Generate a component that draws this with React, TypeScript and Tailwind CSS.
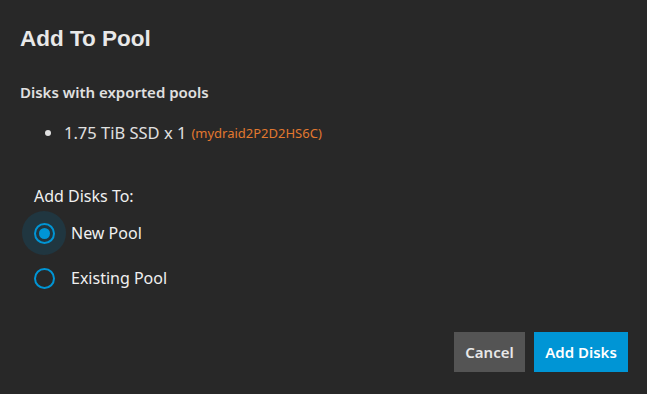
export default function App() {
  const font = { fontFamily: '"Noto Sans", "Open Sans", sans-serif' };
  return (
    <div className="w-[647px] h-[394px] bg-[#282828] text-[#e6e6e6] flex flex-col" style={font}>
      <div className="pl-[20px] pt-[24px] text-[22.5px] font-bold leading-[30px] text-[#e8e8e8] [font-family:'Liberation_Sans',sans-serif]">
        Add To Pool
      </div>
      <div className="pl-[20px] mt-[28px] text-[15px] font-semibold leading-[20px] text-[#e0e0e0]">
        Disks with exported pools
      </div>
      <ul className="mt-[19px] pl-[45px] flex flex-col">
        <li className="flex items-center gap-[13px] leading-[24px]">
          <span className="w-[6px] h-[6px] rounded-full bg-[#e0e0e0]" />
          <span className="text-[16.5px] text-[#e0e0e0]">1.75 TiB SSD x 1</span>
          <span className="-ml-[8px] text-[13px] text-[#e2782f]">(mydraid2P2D2HS6C)</span>
        </li>
      </ul>
      <div className="pl-[34px] mt-[39px] text-[16px] leading-[24px] text-[#f0f0f0]">Add Disks To:</div>
      <div className="pl-[22px] mt-[3px] flex flex-col">
        <div className="flex items-center h-[44px]">
          <div className="w-[44px] h-[44px] rounded-full bg-[#203640] flex items-center justify-center">
            <div className="w-[21px] h-[21px] rounded-full border-2 border-[#0095d5] flex items-center justify-center">
              <div className="w-[11px] h-[11px] rounded-full bg-[#0095d5]" />
            </div>
          </div>
          <span className="ml-[5px] text-[16px] text-[#f0f0f0]">New Pool</span>
        </div>
        <div className="flex items-center h-[44px] mt-[1px]">
          <div className="w-[44px] h-[44px] flex items-center justify-center">
            <div className="w-[21px] h-[21px] rounded-full border-2 border-[#0095d5]" />
          </div>
          <span className="ml-[5px] text-[16px] text-[#f0f0f0]">Existing Pool</span>
        </div>
      </div>
      <div className="flex justify-end gap-[9px] pr-[19px] mt-auto mb-[22px]">
        <button className="h-[40px] w-[71px] bg-[#545454] text-[#e8e8e8] text-[15px] font-semibold">Cancel</button>
        <button className="h-[40px] w-[94px] bg-[#0095d5] text-white text-[15px] font-semibold">Add Disks</button>
      </div>
    </div>
  );
}
